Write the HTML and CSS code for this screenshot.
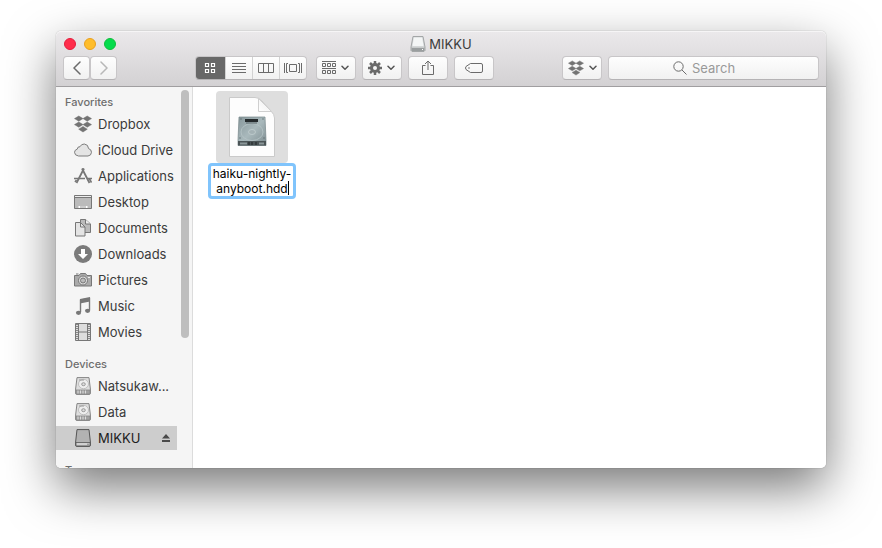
FILE: index.html
```html
<!DOCTYPE html>
<html lang="en">
<head>
<meta charset="utf-8">
<title>MIKKU</title>
<link rel="stylesheet" href="styles.css">
</head>
<body>
<svg class="defs" aria-hidden="true">
  <symbol id="dropbox" viewBox="0 0 18 18"><path d="M4.800 1 9 3.600 4.800 6.200.5 3.600zM13.200 1l4.300 2.600-4.300 2.600L9 3.600zM4.800 7 9 9.600l-4.200 2.600L.5 9.600zM13.200 7l4.300 2.600-4.300 2.600L9 9.600zM9 11.400l4.300 2.800L9 17l-4.300-2.800z" fill="#737373" stroke="#737373" stroke-width=".5"/></symbol>
  <symbol id="chevron" viewBox="0 0 8 6"><path d="M1 1.200 4 4.200 7 1.200" fill="none" stroke="#555" stroke-width="1.500" stroke-linecap="round" stroke-linejoin="round"/></symbol>
  <symbol id="disk" viewBox="0 0 18 18"><path d="M3 .6h12l1.400 11.400v4.200q0 1.200-1.200 1.200H2.800q-1.200 0-1.200-1.200V12z" fill="#dedede" stroke="#858585"/><path d="M2 13h14v4H2z" fill="#a2a2a2" stroke="#858585" stroke-width=".8"/><path d="M4 13.500v3M6.500 13.500v3M9 13.500v3M11.500 13.500v3" stroke="#ddd"/><ellipse cx="9.500" cy="7" rx="5" ry="4.700" fill="#eee" stroke="#b5b5b5" stroke-width=".8"/><ellipse cx="9.500" cy="7.200" rx="1.800" ry="1.500" fill="#ddd" stroke="#888" stroke-width=".8"/><path d="M5 3h5" fill="none" stroke="#999"/></symbol>
</svg>
<main class="window">
  <header class="chrome">
    <div class="titlebar">
      <div class="lights">
        <button class="light close" aria-label="Close"></button>
        <button class="light minimize" aria-label="Minimize"></button>
        <button class="light zoom" aria-label="Zoom"></button>
      </div>
      <h1 class="title">
        <svg width="16" height="16" viewBox="0 0 16 16" aria-hidden="true"><path d="M3 .5h10L15 11v3.500l-1 1H2l-1-1V11z" fill="#d4d7d8" stroke="#a3a6a7"/><path d="M3.800 1.500h8.400l1.300 8.500h-11z" fill="#f4f6f6"/><path d="M1.500 11.500h13v3.500h-13z" fill="#9a9e9f"/><path d="M2 11.500h12" stroke="#c9cccc"/><path d="M12 13.500h1" stroke="#fff"/></svg>
        MIKKU
      </h1>
    </div>
    <div class="toolbar">
      <div class="nav">
        <button class="btn nav-btn" aria-label="Back"><svg width="8" height="14" viewBox="0 0 8 14"><path d="M7 1 1 7l6 6" class="line strong"/></svg></button>
        <button class="btn nav-btn" aria-label="Forward"><svg width="8" height="14" viewBox="0 0 8 14"><path d="m1 1 6 6-6 6" class="line faint"/></svg></button>
      </div>
      <div class="spacer wide"></div>
      <div class="tools">
        <div class="views">
          <button class="view active" aria-label="Icons"><svg width="12" height="12" viewBox="0 0 12 12"><path d="M1.500 1.500h3v3h-3zM7.500 1.500h3v3h-3zM1.500 7.500h3v3h-3zM7.500 7.500h3v3h-3z" fill="none" stroke="#fff" stroke-width="1.200"/></svg></button>
          <button class="view" aria-label="List"><svg width="14" height="12" viewBox="0 0 14 12"><path d="M0 1.500h14M0 4.500h14M0 7.500h14M0 10.500h14" class="thin"/></svg></button>
          <button class="view" aria-label="Columns"><svg width="16" height="12" viewBox="0 0 16 12"><path d="M.5 1.500h15v9H.5zM5.500 1.500v9M10.500 1.500v9" class="thin"/></svg></button>
          <button class="view" aria-label="Cover Flow"><svg width="18" height="12" viewBox="0 0 18 12"><path d="M5.500 2.500h7v7h-7zM.5 1v10M17.500 1v10M2.500 1.500v9M15.500 1.500v9M2.500 1.500H4M2.500 10.500H4M14 1.500h1.500M14 10.500h1.500" class="thin"/></svg></button>
        </div>
        <button class="btn tool" aria-label="Arrange"><svg width="14" height="14" viewBox="0 0 14 14"><path d="M0 .5h14M0 7.500h14M.5 2.500h3v3h-3zM5.500 2.500h3v3h-3zM10.500 2.500h3v3h-3zM.5 9.500h3v3h-3zM5.500 9.500h3v3h-3zM10.500 9.500h3v3h-3z" class="thin"/></svg><svg width="8" height="6"><use href="#chevron"/></svg></button>
        <button class="btn tool" aria-label="Action"><svg width="14" height="14" viewBox="0 0 14 14"><path d="M7 0v14M0 7h14M2 2l10 10M12 2 2 12" stroke="#6b6b6b" stroke-width="2.500"/><circle cx="7" cy="7" r="3.500" fill="none" stroke="#6b6b6b" stroke-width="3"/><circle cx="7" cy="7" r="2" fill="#f6f6f6"/></svg><svg width="8" height="6"><use href="#chevron"/></svg></button>
        <button class="btn tool" aria-label="Share"><svg width="12" height="16" viewBox="0 0 12 16"><path d="M3.500 5.500h-3v9h11v-9h-3M6 10V1M3 4l3-3 3 3" class="thin"/></svg></button>
        <button class="btn tool" aria-label="Tags"><svg width="18" height="12" viewBox="0 0 18 12"><path d="M5.500 1.500H16q1.500 0 1.500 1.500v6q0 1.500-1.500 1.500H5.500L1 7.500Q0 6 1 4.500z" class="thin"/><circle cx="4" cy="6" r=".8" fill="#6b6b6b"/></svg></button>
      </div>
      <div class="spacer"></div>
      <button class="btn tool" aria-label="Dropbox"><svg width="16" height="16"><use href="#dropbox"/></svg><svg width="8" height="6"><use href="#chevron"/></svg></button>
      <label class="btn search">
        <svg width="14" height="14" viewBox="0 0 14 14" aria-hidden="true"><circle cx="5.500" cy="5.500" r="4.700" class="thin"/><path d="m9 9 4.500 4.500" class="thin"/></svg>
        <input type="search" placeholder="Search" aria-label="Search">
      </label>
    </div>
  </header>
  <div class="content">
    <nav class="sidebar" aria-label="Locations">
      <h2>Favorites</h2>
      <ul>
        <li><a href="#"><svg width="18" height="18"><use href="#dropbox"/></svg>Dropbox</a></li>
        <li><a href="#"><svg width="18" height="18" viewBox="0 0 18 18"><path d="M4.500 15Q.6 14.500.5 11.300q.2-2.600 2.700-3.100.2-2.700 2.800-2.500Q7.200 3 10.300 3q4 .4 4.300 4.600 2.800.7 2.900 3.700-.2 3.300-3.500 3.700z" fill="#e4e4e4" stroke="#7c7c7c"/></svg>iCloud Drive</a></li>
        <li><a href="#"><svg width="18" height="18" viewBox="0 0 18 18"><path d="m8 1.500 7.500 14.500M10 1.500 2.500 16" fill="none" stroke="#777" stroke-width="1.800"/><path d="M0 11.500h11M13.500 11.500H18M1 15l1.500-2M17.500 15.500l-2-3.500" stroke="#777" stroke-width="1.600"/></svg>Applications</a></li>
        <li><a href="#"><svg width="18" height="18" viewBox="0 0 18 18"><path d="M.5 2.500h17v13H.5z" fill="#bbb" stroke="#777"/><path d="M1 3h16v1H1z" fill="#eee"/><path d="M1 4.500h16" stroke="#777"/><path d="M4.500 13h9v2h-9z" fill="#fff"/><path d="M7 13v2M9 13v2M11 13v2" stroke="#999"/></svg>Desktop</a></li>
        <li><a href="#"><svg width="18" height="18" viewBox="0 0 18 18"><path d="M6.500.5h5l5 4.500v8.500h-10z" fill="#bbb" stroke="#777"/><path d="M11.500.5V5h5" fill="#eee" stroke="#777"/><path d="M1.500 3.500h5l4.500 4.500v9h-9.500z" fill="#e4e4e4" stroke="#777"/><path d="M6.500 3.500V8H11" fill="none" stroke="#777"/></svg>Documents</a></li>
        <li><a href="#"><svg width="18" height="18" viewBox="0 0 18 18"><circle cx="9" cy="9" r="9" fill="#7b7b7b"/><path d="M7 4h4v5h3l-5 5-5-5h3z" fill="#fff"/></svg>Downloads</a></li>
        <li><a href="#"><svg width="18" height="18" viewBox="0 0 18 18"><path d="M.5 4.500H5L6.500 2.500h5L13 4.500h4.500v10.500H.5z" fill="#aaa" stroke="#777"/><path d="M2 3h2.500" stroke="#777"/><circle cx="9" cy="9.500" r="4.500" fill="#ddd" stroke="#777"/><circle cx="9" cy="9.500" r="2.500" fill="#bbb" stroke="#777"/><path d="M14 6.500h2" stroke="#eee"/></svg>Pictures</a></li>
        <li><a href="#"><svg width="18" height="18" viewBox="0 0 18 18"><path d="M6.500 15V3l9-1.500V13" fill="none" stroke="#777" stroke-width="1.400"/><path d="m6 2 10-2V4.500l-10 2z" fill="#777"/><ellipse cx="4.500" cy="15.800" rx="2.600" ry="2.100" fill="#777"/><ellipse cx="13.600" cy="13.800" rx="2.600" ry="2.100" fill="#777"/></svg>Music</a></li>
        <li><a href="#"><svg width="18" height="18" viewBox="0 0 18 18"><path d="M1.500.5h15v17h-15z" fill="#ddd" stroke="#777"/><path d="M4.500 1v16M13.500 1v16M4.500 9h9" stroke="#777"/><path d="M3 1v16M15 1v16" stroke="#888" stroke-width="2" stroke-dasharray="1 1"/></svg>Movies</a></li>
      </ul>
      <h2>Devices</h2>
      <ul>
        <li><a href="#"><svg width="18" height="18"><use href="#disk"/></svg>Natsukaw...</a></li>
        <li><a href="#"><svg width="18" height="18"><use href="#disk"/></svg>Data</a></li>
        <li class="selected"><a href="#"><svg width="18" height="18" viewBox="0 0 18 18"><path d="M3 .6h12l1.400 12.400v3.200q0 1.200-1.200 1.200H2.800q-1.200 0-1.200-1.200V13z" fill="#b2b2b2" stroke="#555"/><path d="M2 13.500h14v3.400H2z" fill="#d0d0d0" stroke="#555" stroke-width=".8"/><path d="M13.500 15.200h1" stroke="#444"/></svg>MIKKU</a>
          <button class="eject" aria-label="Eject MIKKU"><svg width="8" height="8" viewBox="0 0 8 8"><path d="M4 0 8 4.500H0zM0 6h8v2H0z" fill="#4a4a4a"/></svg></button></li>
      </ul>
      <h2>Tags</h2>
      <div class="scrollbar"></div>
    </nav>
    <section class="files" aria-label="Files">
      <div class="file">
        <div class="thumb">
          <svg width="48" height="62" viewBox="0 0 48 62" aria-hidden="true">
            <defs><linearGradient id="metal" x2="1" y2="1"><stop stop-color="#87979b"/><stop offset=".5" stop-color="#a9b9bc"/><stop offset="1" stop-color="#7d8c90"/></linearGradient><linearGradient id="fold" x1="0" y1="1" x2="1" y2="0"><stop stop-color="#fff"/><stop offset="1" stop-color="#ececec"/></linearGradient></defs>
            <path d="M1.500 1.500H27q4 0 7 3.500l9 10q3.500 3.500 3.500 7v38.500h-45z" fill="#fdfdfd" stroke="#cacaca"/>
            <path d="M30.500 2.500V15.500h13z" fill="url(#fold)" stroke="#cfcfcf"/>
            <path d="M11 21h26l1 23v5.500H10V44z" fill="url(#metal)" stroke="#77868a" stroke-width=".7"/>
            <ellipse cx="24" cy="36" rx="11" ry="8.500" fill="none" stroke="#b8c5c8" stroke-width=".8"/>
            <ellipse cx="24" cy="36" rx="3.500" ry="2.500" fill="#a4b2b5" stroke="#c3cfd1" stroke-width=".8"/>
            <path d="M17 23h13v3H17z" fill="#252b2d"/><path d="M18 27h11" stroke="#5b676a"/>
            <path d="M10 45h28v4.500H10z" fill="#4b5456"/><path d="M12 47.500h7M31 47.500h5" stroke="#8a9698" stroke-width="2"/><path d="M21 46v3M24 46v3M28 46v3" stroke="#1e2324"/>
            <circle cx="13" cy="23" r=".7" fill="#5d6a6d"/><circle cx="35" cy="23" r=".7" fill="#5d6a6d"/><circle cx="12" cy="42" r=".7" fill="#5d6a6d"/><circle cx="36" cy="42" r=".7" fill="#5d6a6d"/>
          </svg>
        </div>
        <div class="rename">
          <textarea rows="2" aria-label="File name" spellcheck="false">haiku-nightly-
anyboot.hdd</textarea>
          <span class="caret"></span>
        </div>
      </div>
    </section>
  </div>
</main>
</body>
</html>
```
FILE: styles.css
```css
* { box-sizing: border-box; }

body {
  margin: 0;
  height: 100vh;
  padding: 31px 56px 80px;
  overflow: hidden;
  background: #fff;
  font: 13px/18px Inter, "Liberation Sans", sans-serif;
  color: #3b3b3b;
}

.defs { position: absolute; width: 0; height: 0; }

button, input, textarea { font: inherit; color: inherit; }
button { padding: 0; border: 0; background: none; }
svg { display: block; flex: none; }

.line { fill: none; stroke-width: 1.5; stroke-linecap: round; }
.strong { stroke: #6b6b6b; }
.faint { stroke: #b8b8b8; }
.thin { fill: none; stroke: #6b6b6b; }

.window {
  display: flex;
  flex-direction: column;
  height: 100%;
  border-radius: 5px;
  box-shadow: 0 0 1px rgba(0, 0, 0, .5), 0 20px 50px rgba(0, 0, 0, .53);
}

.chrome {
  height: 56px;
  border-bottom: 1px solid #a09ea0;
  border-radius: 5px 5px 0 0;
  background: linear-gradient(#ebe9eb, #d3d1d3);
  box-shadow: inset 0 1px #f6f5f6;
}

.titlebar {
  display: grid;
  grid-template-columns: 1fr auto 1fr;
  align-items: center;
  height: 25px;
  padding: 0 8px;
}

.lights { display: flex; gap: 8px; }
.light { width: 12px; height: 12px; border-radius: 50%; }
.close { background: #ff2d4b; border: 1px solid #e51d3d; }
.minimize { background: #ffbd2b; border: 1px solid #e9a01e; }
.zoom { background: #05dc4c; border: 1px solid #10bd3c; }

.title {
  display: flex;
  align-items: center;
  gap: 3px;
  margin: 0;
  font-size: 13px;
  font-weight: 400;
  color: #3b3b3b;
}

.toolbar { display: flex; padding: 0 7px; }
.tools { display: flex; gap: 6px; }
.nav { display: flex; }
.spacer { flex: 7; }
.wide { flex: 8; }

.btn, .views {
  height: 24px;
  border: 1px solid #c8c6c8;
  border-bottom-color: #b5b3b5;
  border-radius: 4px;
  background: linear-gradient(#fefefe, #f1f1f1);
}

.btn {
  display: flex;
  align-items: center;
  justify-content: center;
  gap: 5px;
}

.nav-btn { width: 27px; }
.tool { width: 40px; }

.views { display: flex; width: 112px; margin-right: 3px; overflow: hidden; }
.view {
  display: flex;
  flex: 1;
  align-items: center;
  justify-content: center;
  border-left: 1px solid #d2d2d2;
}
.view.active { flex: 0 0 29px; border: 0; background: #686868; }

.search { width: 211px; margin-left: 6px; padding-right: 18px; }
.search input {
  width: auto;
  min-width: 44px;
  padding: 0;
  border: 0;
  outline: 0;
  background: none;
  appearance: none;
  field-sizing: content;
}
.search input::-webkit-search-cancel-button,
.search input::-webkit-search-decoration { display: none; }
.search input::placeholder { color: #999; opacity: 1; }

.content {
  display: flex;
  flex: 1;
  min-height: 0;
  overflow: hidden;
  border-radius: 0 0 5px 5px;
  background: #fff;
}

.sidebar {
  position: relative;
  flex: 0 0 137px;
  overflow: hidden;
  padding-top: 6px;
  border-right: 1px solid #dcdcdc;
  background: #f5f5f5;
}
.sidebar h2 {
  margin: 0;
  padding-left: 9px;
  font-size: 11px;
  font-weight: 500;
  color: #6e6e6e;
}
.sidebar ul { margin: 0 0 11px; padding: 0; list-style: none; }
.sidebar li {
  display: flex;
  align-items: center;
  height: 24px;
  margin: 1px 15px 2px 0;
  padding: 0 7px 0 18px;
}
.sidebar a {
  display: flex;
  flex: 1;
  align-items: center;
  gap: 6px;
  color: inherit;
  text-decoration: none;
  white-space: nowrap;
}
.sidebar .selected { background: #cdcdcd; color: #1c1c1c; }

.scrollbar {
  position: absolute;
  top: 3px;
  right: 3px;
  width: 8px;
  height: 248px;
  border-radius: 4px;
  background: #bebebe;
}

.files { flex: 1; padding: 4px 15px; }
.file { display: flex; flex-direction: column; align-items: center; width: 88px; }
.thumb {
  display: grid;
  place-items: center;
  width: 72px;
  height: 72px;
  border-radius: 4px;
  background: #dedede;
}
.rename { position: relative; width: 100%; }
.rename textarea {
  display: block;
  width: 100%;
  height: 36px;
  padding: 0;
  border: 3px solid #80c4fc;
  border-radius: 4px;
  outline: 0;
  resize: none;
  overflow: hidden;
  background: #fff;
  color: #000;
  font-size: 12px;
  line-height: 15px;
  text-align: center;
}
.caret {
  position: absolute;
  right: 7px;
  bottom: 4px;
  width: 1px;
  height: 14px;
  background: #000;
}
```
